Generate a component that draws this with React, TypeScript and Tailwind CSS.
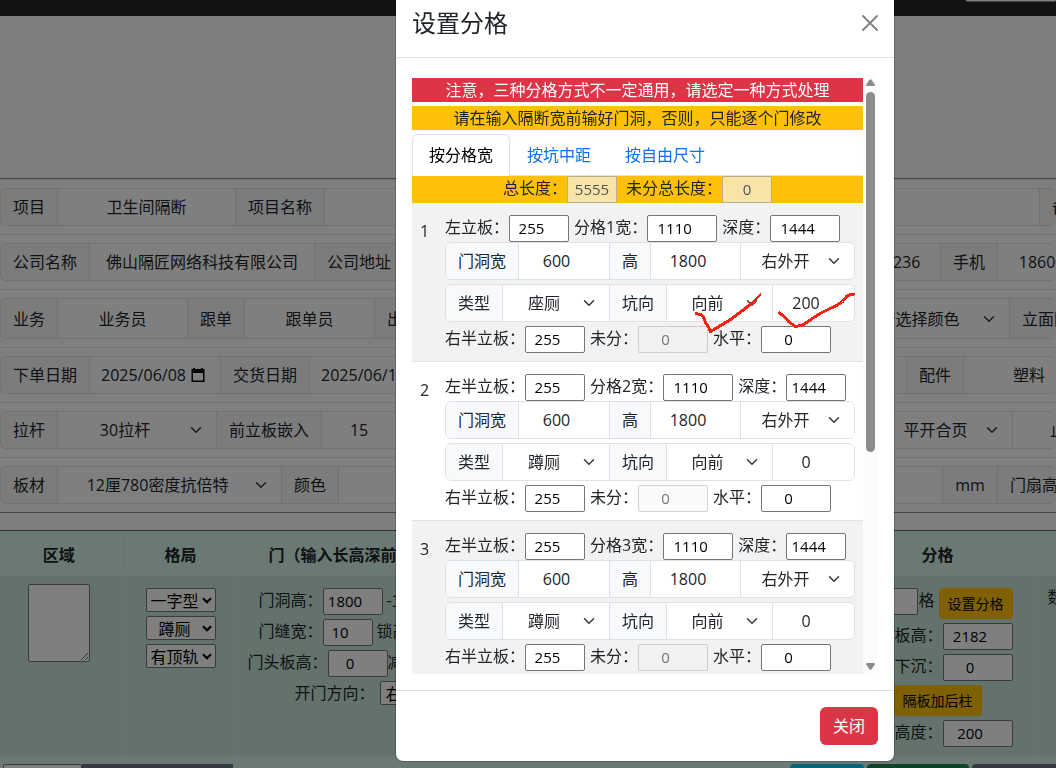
import { useId } from "react";
import type { ReactNode } from "react";
import clsx from "clsx";

type Cell =
  | { kind: "label"; text: string; width?: string }
  | { kind: "text"; name: string; value: string; width: string }
  | { kind: "number"; name: string; value: string; width: string }
  | { kind: "date"; name: string; value: string; width: string }
  | { kind: "select"; name: string; value: string; width: string };

const orderRows: { height: string; cells: Cell[] }[] = [
  {
    height: "h-[38px]",
    cells: [
      { kind: "label", text: "项目" },
      { kind: "text", name: "项目", value: "卫生间隔断", width: "w-[178px]" },
      { kind: "label", text: "项目名称" },
      { kind: "text", name: "项目名称", value: "", width: "w-[715px]" },
      { kind: "label", text: "备注" },
    ],
  },
  {
    height: "h-[38px]",
    cells: [
      { kind: "label", text: "公司名称" },
      { kind: "text", name: "公司名称", value: "佛山隔匠网络科技有限公司", width: "w-[225px]" },
      { kind: "label", text: "公司地址" },
      { kind: "text", name: "公司地址", value: "", width: "w-[339px]" },
      { kind: "label", text: "电话" },
      { kind: "text", name: "电话", value: "13800000236", width: "w-[141px]" },
      { kind: "label", text: "手机" },
      { kind: "text", name: "手机", value: "18600000000", width: "w-[142px]" },
    ],
  },
  {
    height: "h-[41px]",
    cells: [
      { kind: "label", text: "业务" },
      { kind: "text", name: "业务", value: "业务员", width: "w-[130px]" },
      { kind: "label", text: "跟单" },
      { kind: "text", name: "跟单", value: "跟单员", width: "w-[130px]" },
      { kind: "label", text: "出货" },
      { kind: "text", name: "出货", value: "", width: "w-[365px]" },
      { kind: "label", text: "颜色" },
      { kind: "select", name: "颜色", value: "请选择颜色", width: "w-[156px]" },
      { kind: "label", text: "立面图" },
    ],
  },
  {
    height: "h-[38px]",
    cells: [
      { kind: "label", text: "下单日期" },
      { kind: "date", name: "下单日期", value: "2025/06/08", width: "w-[131px]" },
      { kind: "label", text: "交货日期" },
      { kind: "date", name: "交货日期", value: "2025/06/18", width: "w-[131px]" },
      { kind: "text", name: "交货备注", value: "", width: "w-[466px]" },
      { kind: "label", text: "配件" },
      { kind: "select", name: "配件", value: "塑料", width: "w-[154px]" },
    ],
  },
  {
    height: "h-[38px]",
    cells: [
      { kind: "label", text: "拉杆" },
      { kind: "select", name: "拉杆", value: "30拉杆", width: "w-[159px]" },
      { kind: "label", text: "前立板嵌入" },
      { kind: "number", name: "前立板嵌入", value: "15", width: "w-[90px]" },
      { kind: "text", name: "拉杆备注", value: "", width: "w-[414px]" },
      { kind: "label", text: "合页" },
      { kind: "select", name: "合页", value: "平开合页", width: "w-[130px]" },
      { kind: "select", name: "止口", value: "止口", width: "w-[130px]" },
    ],
  },
  {
    height: "h-[38px]",
    cells: [
      { kind: "label", text: "板材" },
      { kind: "select", name: "板材", value: "12厘780密度抗倍特", width: "w-[224px]" },
      { kind: "label", text: "颜色" },
      { kind: "text", name: "板材颜色", value: "", width: "w-[604px]" },
      { kind: "label", text: "mm", width: "w-[55px]" },
      { kind: "label", text: "门扇高" },
    ],
  },
];

const partitions = [
  { left: "左立板", type: "座厕", offset: "200", depthWidth: "w-[70px]", marked: true },
  { left: "左半立板", type: "蹲厕", offset: "0", depthWidth: "w-[60px]", marked: false },
  { left: "左半立板", type: "蹲厕", offset: "0", depthWidth: "w-[60px]", marked: false },
];

function Chevron() {
  return (
    <svg
      viewBox="0 0 16 16"
      className="pointer-events-none absolute right-3 top-1/2 h-3 w-4 -translate-y-1/2"
      fill="none"
      stroke="#343a40"
      strokeWidth="2"
      strokeLinecap="round"
      strokeLinejoin="round"
    >
      <path d="m2 5 6 6 6-6" />
    </svg>
  );
}

function GroupLabel({ children, width }: { children: ReactNode; width?: string }) {
  return (
    <span
      className={clsx(
        "flex shrink-0 items-center justify-center whitespace-nowrap border-r border-[#dee2e6] bg-[#f8f9fa] px-3",
        width,
      )}
    >
      {children}
    </span>
  );
}

function GroupSelect({ name, value, width }: { name: string; value: string; width: string }) {
  return (
    <div className={clsx("relative shrink-0 border-r border-[#dee2e6] bg-white last:border-r-0", width)}>
      <select
        aria-label={name}
        defaultValue={value}
        className="h-full w-full appearance-none bg-transparent pl-3 pr-9 text-center"
      >
        <option>{value}</option>
      </select>
      <Chevron />
    </div>
  );
}

function GroupInput({
  name,
  value,
  width,
  type = "text",
}: {
  name: string;
  value: string;
  width: string;
  type?: string;
}) {
  return (
    <input
      type={type}
      aria-label={name}
      defaultValue={value}
      className={clsx(
        "shrink-0 border-r border-[#dee2e6] bg-white px-3 text-center last:border-r-0",
        width,
      )}
    />
  );
}

function DateInput({ name, value, width }: { name: string; value: string; width: string }) {
  return (
    <div className={clsx("flex shrink-0 items-center border-r border-[#dee2e6] bg-white pl-[11px]", width)}>
      <input aria-label={name} defaultValue={value} className="w-[87px]" />
      <button type="button" aria-label="打开日历" className="ml-[3px]">
        <svg viewBox="0 0 14 15" className="h-[15px] w-[14px]">
          <path d="M2 0h2v1h6V0h2v1h1.500v13h-13V1H2z" fill="black" />
          <path d="M2 5h10v7.500H2z" fill="white" />
        </svg>
      </button>
    </div>
  );
}

function OrderCell({ cell }: { cell: Cell }) {
  switch (cell.kind) {
    case "label":
      return <GroupLabel width={cell.width}>{cell.text}</GroupLabel>;
    case "select":
      return <GroupSelect name={cell.name} value={cell.value} width={cell.width} />;
    case "date":
      return <DateInput name={cell.name} value={cell.value} width={cell.width} />;
    default:
      return <GroupInput name={cell.name} value={cell.value} width={cell.width} type={cell.kind} />;
  }
}

// plain browser-style box with its label in front
function PlainField({
  label,
  value,
  width,
  disabled = false,
}: {
  label: string;
  value: string;
  width: string;
  disabled?: boolean;
}) {
  const id = useId();
  return (
    <div className="flex shrink-0 items-start">
      <label htmlFor={id} className="whitespace-nowrap">
        {label}
      </label>
      <input
        id={id}
        type="number"
        defaultValue={value}
        disabled={disabled}
        className={clsx(
          "h-[27px] rounded-[2px] border pb-0.5 text-center text-[15px]",
          disabled
            ? "border-[#767676]/30 bg-[#efefef]/30 text-[#545454]/80"
            : "border-[#767676] bg-white text-black",
          width,
        )}
      />
    </div>
  );
}

function PlainSelect({ name, value, width }: { name: string; value: string; width: string }) {
  return (
    <div className={clsx("relative h-6 shrink-0", width)}>
      <select
        aria-label={name}
        defaultValue={value}
        className="h-6 w-full appearance-none rounded-[2px] border border-[#767676] bg-white pl-1 pr-4 text-center text-black"
      >
        <option>{value}</option>
      </select>
      <svg
        viewBox="0 0 10 7"
        className="pointer-events-none absolute right-1 top-[9px] h-[7px] w-[10px]"
        fill="none"
        stroke="black"
        strokeWidth="2.2"
      >
        <path d="m1 1.200 4 4 4-4" />
      </svg>
    </div>
  );
}

function YellowButton({ children }: { children: ReactNode }) {
  return (
    <button type="button" className="h-[31px] rounded bg-[#ffc107] px-[9px] text-sm text-black">
      {children}
    </button>
  );
}

function OrderForm() {
  return (
    <div className="mt-[162px] border-y border-[#8e8e8e]">
      {orderRows.map((row, i) => (
        <div key={i} className="border-t border-[#dee2e6] py-2">
          <div className={clsx("flex overflow-hidden rounded-md border border-r-0 border-[#dee2e6]", row.height)}>
            {row.cells.map((cell, j) => (
              <OrderCell key={j} cell={cell} />
            ))}
          </div>
        </div>
      ))}
    </div>
  );
}

function AreaTable() {
  return (
    <div className="mt-[17px] border-t border-[#606060] bg-[#d4f2e7] pt-[3px]">
      <table className="w-[1160px] table-fixed border-collapse">
        <colgroup>
          <col className="w-[124px]" />
          <col className="w-[113px]" />
          <col className="w-[601px]" />
          <col className="w-[199px]" />
          <col className="w-[123px]" />
        </colgroup>
        <thead>
          <tr className="h-[41px] border-y border-[#dfe0e4]">
            <th className="border-r border-[#dfe0e4] pr-1.5">区域</th>
            <th className="border-r border-[#dfe0e4]">格局</th>
            <th className="border-r border-[#dfe0e4] pl-[31px] text-left">门（输入长高深前后）</th>
            <th className="border-r border-[#dfe0e4]">分格</th>
            <th>数量</th>
          </tr>
        </thead>
        <tbody>
          <tr className="h-[180px] border-b border-[#dfe0e4] bg-[#c8e4d9] align-top">
            <td className="border-r border-[#dfe0e4] pl-7 pt-2">
              <textarea
                aria-label="区域"
                className="h-[78px] w-[62px] rounded-[2px] border border-[#767676] bg-white"
              />
            </td>
            <td className="border-r border-[#dfe0e4] pt-3">
              <div className="flex flex-col items-center gap-1">
                <PlainSelect name="布局" value="一字型" width="w-[70px]" />
                <PlainSelect name="厕型" value="蹲厕" width="w-[70px]" />
                <PlainSelect name="顶轨" value="有顶轨" width="w-[70px]" />
              </div>
            </td>
            <td className="border-r border-[#dfe0e4] pt-3">
              <div className="flex flex-col gap-1">
                <div className="flex items-start gap-1 pl-[21px]">
                  <PlainField label="门洞高：" value="1800" width="w-[60px]" />
                  <span>-立板</span>
                </div>
                <div className="flex items-start gap-1 pl-[21px]">
                  <PlainField label="门缝宽：" value="10" width="w-[50px]" />
                  <span>锁高</span>
                </div>
                <div className="flex items-start pl-[10px]">
                  <PlainField label="门头板高：" value="0" width="w-[60px]" />
                  <span>减高</span>
                </div>
                <div className="flex items-start gap-[5px] pl-[57px]">
                  <span>开门方向：</span>
                  <PlainSelect name="开门方向" value="右外开" width="w-[72px]" />
                </div>
              </div>
            </td>
            <td className="border-r border-[#dfe0e4] pr-6 pt-3">
              <div className="flex flex-col items-end gap-1">
                <div className="flex items-start">
                  <PlainField label="分" value="3" width="w-[50px]" />
                  <span className="mr-1">格</span>
                  <YellowButton>设置分格</YellowButton>
                </div>
                <PlainField label="隔板高：" value="2182" width="w-[70px]" />
                <PlainField label="下沉：" value="0" width="w-[70px]" />
                <div className="pr-[31px]">
                  <YellowButton>隔板加后柱</YellowButton>
                </div>
                <PlainField label="高度：" value="200" width="w-[70px]" />
              </div>
            </td>
            <td className="pl-[10px] pt-[9px]">数量</td>
          </tr>
        </tbody>
      </table>
      <div className="mt-2 flex w-[1160px] pl-[3px]">
        <input
          aria-label="文件"
          className="h-9 w-[79px] rounded-[2px] border border-[#6c757d] bg-white"
        />
        <button type="button" className="h-9 w-[151px] bg-[#6c757d] text-white">
          添加
        </button>
        <div className="ml-[557px] flex gap-[3px] text-white">
          <button type="button" className="h-9 w-[74px] rounded bg-[#0dcaf0]">
            预览
          </button>
          <button type="button" className="h-9 w-[102px] rounded bg-[#198754]">
            保存
          </button>
          <button type="button" className="h-9 w-[102px] rounded bg-[#6c757d]">
            返回
          </button>
        </div>
      </div>
    </div>
  );
}

function TickMarks() {
  return (
    <svg
      viewBox="0 0 410 38"
      className="pointer-events-none absolute left-0 top-0 h-[38px] w-[410px] overflow-visible"
      fill="none"
      stroke="#ff1e10"
      strokeWidth="3"
      strokeLinecap="round"
      strokeLinejoin="round"
      shapeRendering="crispEdges"
    >
      <path d="M251 29.500 255.500 30.500 258.500 33 260.500 38.500 263.500 43 265.500 47.500 274 42.500 285 36 295 28.500 302 23 309 17.500" />
      <path d="M309 17.500 315.500 10" strokeWidth="2" />
      <path d="M334.500 29 340 33 343.500 37.500 350.500 42.500 358 41 368 34 376 29 385 24.500 391.500 21.500 397.500 17.500 401.500 12.500 404.500 11 409 10" />
    </svg>
  );
}

function Partition({ index, item }: { index: number; item: (typeof partitions)[number] }) {
  return (
    <tr className="border-b border-[#dee2e6] align-top odd:bg-[#f2f2f2]">
      <th scope="row" className="w-[25px] pt-4 font-normal">
        {index}
      </th>
      <td className="px-2 pb-2 pt-3">
        <div className="flex gap-[5px]">
          <PlainField label={`${item.left}：`} value="255" width="w-[60px]" />
          <PlainField label={`分格${index}宽：`} value="1110" width="w-[70px]" />
          <PlainField label="深度：" value="1444" width={item.depthWidth} />
        </div>
        <div className="flex h-[38px] overflow-hidden rounded-md border border-[#dee2e6]">
          <GroupLabel>门洞宽</GroupLabel>
          <GroupInput type="number" name="门洞宽" value="600" width="w-[91px]" />
          <GroupLabel>高</GroupLabel>
          <GroupInput type="number" name="高" value="1800" width="w-[90px]" />
          <GroupSelect name="开门方向" value="右外开" width="w-[113px]" />
        </div>
        <div className="relative my-1">
          <div className="flex h-[38px] overflow-hidden rounded-md border border-[#dee2e6]">
            <GroupLabel>类型</GroupLabel>
            <GroupSelect name="类型" value={item.type} width="w-[107px]" />
            <GroupLabel>坑向</GroupLabel>
            <GroupSelect name="坑向" value="向前" width="w-[106px]" />
            <GroupInput type="number" name="坑距" value={item.offset} width="w-[81px]" />
          </div>
          {item.marked && <TickMarks />}
        </div>
        <div className="flex gap-[5px]">
          <PlainField label="右半立板：" value="255" width="w-[60px]" />
          <PlainField label="未分：" value="0" width="w-[70px]" disabled />
          <PlainField label="水平：" value="0" width="w-[70px]" />
        </div>
      </td>
    </tr>
  );
}

function TotalField({ label, value }: { label: string; value: string }) {
  const id = useId();
  return (
    <div className="flex items-start">
      <label htmlFor={id}>{label}</label>
      <input
        id={id}
        disabled
        defaultValue={value}
        className="h-[27px] w-[50px] rounded-[2px] border border-[#767676]/50 bg-[#f8e4a9] pb-0.5 text-center text-[15px] text-[#545454]"
      />
    </div>
  );
}

function ScrollTrack() {
  return (
    <div aria-hidden="true" className="flex w-[15px] shrink-0 flex-col items-center justify-between bg-[#fcfcfc] pb-1 pt-[5px]">
      <div className="flex flex-col items-center gap-[6px]">
        <svg viewBox="0 0 9 7" className="h-[7px] w-[9px]" fill="#8b8b8b">
          <path d="M3.500.8q1-1.200 2 0L8.800 5.500q.4 1.500-.8 1.500H1Q-.2 7 .2 5.500z" />
        </svg>
        <div className="h-[360px] w-[9px] rounded-full bg-[#8b8b8b]" />
      </div>
      <svg viewBox="0 0 9 7" className="h-[7px] w-[9px]" fill="#8b8b8b">
        <path d="M3.500 6.200q1 1.200 2 0L8.800 1.500Q9.200 0 8 0H1Q-.2 0 .2 1.500z" />
      </svg>
    </div>
  );
}

const tabs = ["按分格宽", "按坑中距", "按自由尺寸"];

function PartitionDialog() {
  return (
    <div
      role="dialog"
      aria-modal="true"
      aria-labelledby="dialog-title"
      className="w-[500px] rounded-b-lg border border-t-0 border-black/20 bg-white bg-clip-padding"
    >
      <div className="flex items-center justify-between border-b border-[#dee2e6] px-4 pb-4 pt-[5px]">
        <h1 id="dialog-title" className="text-2xl leading-9">
          设置分格
        </h1>
        <button type="button" aria-label="关闭">
          <svg viewBox="0 0 16 16" className="h-4 w-4" stroke="#7f7f7f" strokeWidth="1.800" strokeLinecap="round">
            <path d="M1 1 15 15M15 1 1 15" />
          </svg>
        </button>
      </div>

      <div className="p-4">
        <div className="flex h-[600px]">
          <div className="min-w-0 flex-1 overflow-hidden pt-1">
            <div className="bg-[#dc3545] text-center text-white">
              注意，三种分格方式不一定通用，请选定一种方式处理
            </div>
            <div className="mt-1 bg-[#ffc107] text-center">
              请在输入隔断宽前输好门洞，否则，只能逐个门修改
            </div>
            <div role="tablist" className="mt-1 flex border-b border-[#dee2e6]">
              {tabs.map((tab, i) => (
                <button
                  key={tab}
                  type="button"
                  role="tab"
                  aria-selected={i === 0}
                  className={clsx(
                    "-mb-px rounded-t-md border px-4 py-2",
                    i === 0
                      ? "border-[#dee2e6] border-b-white bg-white text-black"
                      : "border-transparent text-[#0d6efd]",
                  )}
                >
                  {tab}
                </button>
              ))}
            </div>
            <div className="flex justify-center gap-[9px] bg-[#ffc107]">
              <TotalField label="总长度：" value="5555" />
              <TotalField label="未分总长度：" value="0" />
            </div>
            <table className="w-full border-collapse">
              <tbody>
                {partitions.map((item, i) => (
                  <Partition key={i} index={i + 1} item={item} />
                ))}
              </tbody>
            </table>
          </div>
          <ScrollTrack />
        </div>
      </div>

      <div className="flex justify-end border-t border-[#dee2e6] p-4">
        <button type="button" className="h-[38px] rounded-md bg-[#dc3545] px-[13px] text-white">
          关闭
        </button>
      </div>
    </div>
  );
}

export default function App() {
  return (
    <div className="h-screen overflow-hidden bg-white font-['Open_Sans','Noto_Sans_CJK_SC',sans-serif] text-base leading-6 text-[#212529]">
      <div className="flex h-4 justify-end bg-[#212529]">
        <div className="h-0.5 w-[90px] rounded-b border-b border-[#8e8e8e] bg-white" />
      </div>
      <OrderForm />
      <AreaTable />

      <div className="fixed inset-0 flex items-start overflow-hidden bg-black/50 pl-[395px]">
        <PartitionDialog />
      </div>
    </div>
  );
}
